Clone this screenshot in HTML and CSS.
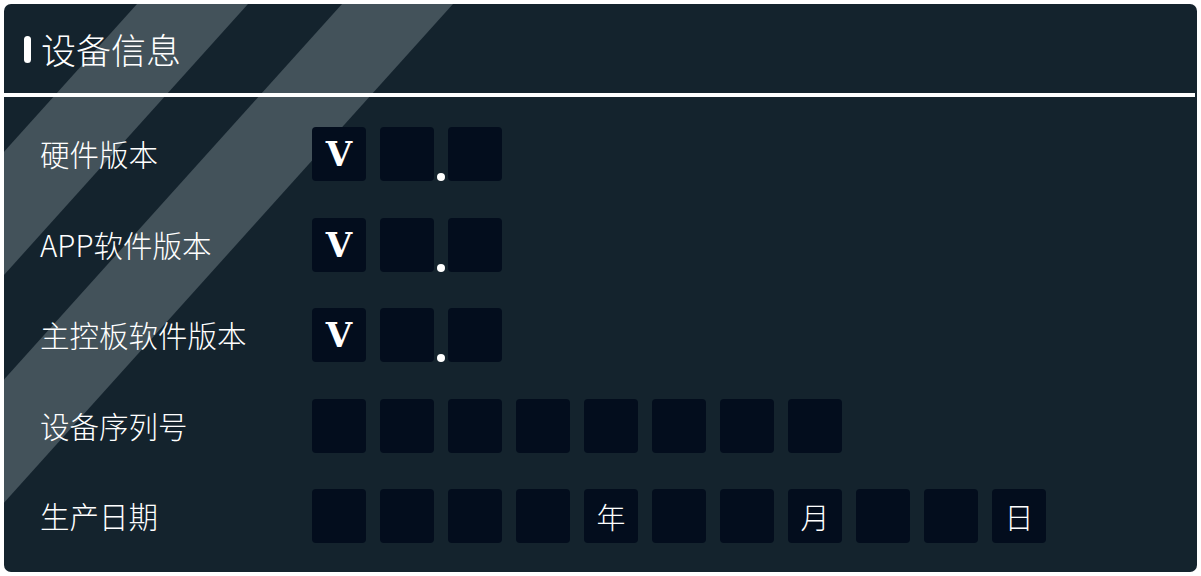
FILE: index.html
```html
<!DOCTYPE html>
<html lang="zh-CN">
<head>
<meta charset="utf-8">
<title>设备信息</title>
<link rel="stylesheet" href="styles.css">
</head>
<body>
<div class="panel">
  <div class="header">
    <span class="bar"></span>
    <h1 class="title">设备信息</h1>
  </div>
  <div class="rows">
    <div class="row">
      <div class="label">硬件版本</div>
      <div class="cells">
        <div class="cell v">V</div>
        <div class="cell dot"></div>
        <div class="cell"></div>
      </div>
    </div>
    <div class="row">
      <div class="label">APP软件版本</div>
      <div class="cells">
        <div class="cell v">V</div>
        <div class="cell dot"></div>
        <div class="cell"></div>
      </div>
    </div>
    <div class="row">
      <div class="label">主控板软件版本</div>
      <div class="cells">
        <div class="cell v">V</div>
        <div class="cell dot"></div>
        <div class="cell"></div>
      </div>
    </div>
    <div class="row">
      <div class="label">设备序列号</div>
      <div class="cells">
        <div class="cell"></div>
        <div class="cell"></div>
        <div class="cell"></div>
        <div class="cell"></div>
        <div class="cell"></div>
        <div class="cell"></div>
        <div class="cell"></div>
        <div class="cell"></div>
      </div>
    </div>
    <div class="row">
      <div class="label">生产日期</div>
      <div class="cells">
        <div class="cell"></div>
        <div class="cell"></div>
        <div class="cell"></div>
        <div class="cell"></div>
        <div class="cell unit">年</div>
        <div class="cell"></div>
        <div class="cell"></div>
        <div class="cell unit">月</div>
        <div class="cell"></div>
        <div class="cell"></div>
        <div class="cell unit">日</div>
      </div>
    </div>
  </div>
</div>
</body>
</html>
```
FILE: styles.css
```css
html, body {
  margin: 0;
  padding: 0;
  background: #ffffff;
}
body {
  padding: 4px;
  font-family: "Noto Sans CJK SC", "Noto Sans", sans-serif;
  font-weight: 300;
  color: #ffffff;
}
.panel {
  position: relative;
  width: 1193px;
  height: 568px;
  box-sizing: border-box;
  background: #14232d;
  border-radius: 7px;
  overflow: hidden;
}
.panel::before,
.panel::after {
  content: "";
  position: absolute;
  top: 0;
  height: 100%;
  width: 111px;
  background: #43525a;
  transform: skewX(-42deg);
  transform-origin: top left;
  z-index: 0;
}
.panel::before { left: 133px; }
.panel::after { left: 338px; }

.header {
  position: relative;
  z-index: 1;
  height: 89px;
  display: flex;
  align-items: center;
  padding-left: 20px;
  gap: 10px;
  border-bottom: 4px solid #ffffff;
  margin-right: 2px;
}
.bar {
  width: 7px;
  height: 27px;
  border-radius: 4px;
  background: #ffffff;
  margin-top: 1px;
}
.title {
  margin: 0;
  font-size: 35px;
  font-weight: 300;
  line-height: 1;
}
.rows {
  position: relative;
  z-index: 1;
  display: flex;
  flex-direction: column;
  gap: 36.5px;
  padding: 30px 0 0 36px;
}
.row {
  display: flex;
  align-items: center;
  height: 54px;
}
.label {
  width: 272px;
  font-size: 29.5px;
  line-height: 1;
}
.cells {
  display: flex;
  gap: 14px;
}
.cell {
  position: relative;
  width: 54px;
  height: 54px;
  border-radius: 4px;
  background: #030d1d;
  display: flex;
  align-items: center;
  justify-content: center;
}
.v {
  font-family: "DejaVu Serif", serif;
  font-weight: 700;
  font-size: 34px;
  line-height: 1;
}
.dot::after {
  content: "";
  position: absolute;
  left: calc(100% + 3px);
  bottom: 0;
  width: 8px;
  height: 8px;
  border-radius: 50%;
  background: #ffffff;
}
.unit {
  font-size: 29px;
  line-height: 1;
}
```
